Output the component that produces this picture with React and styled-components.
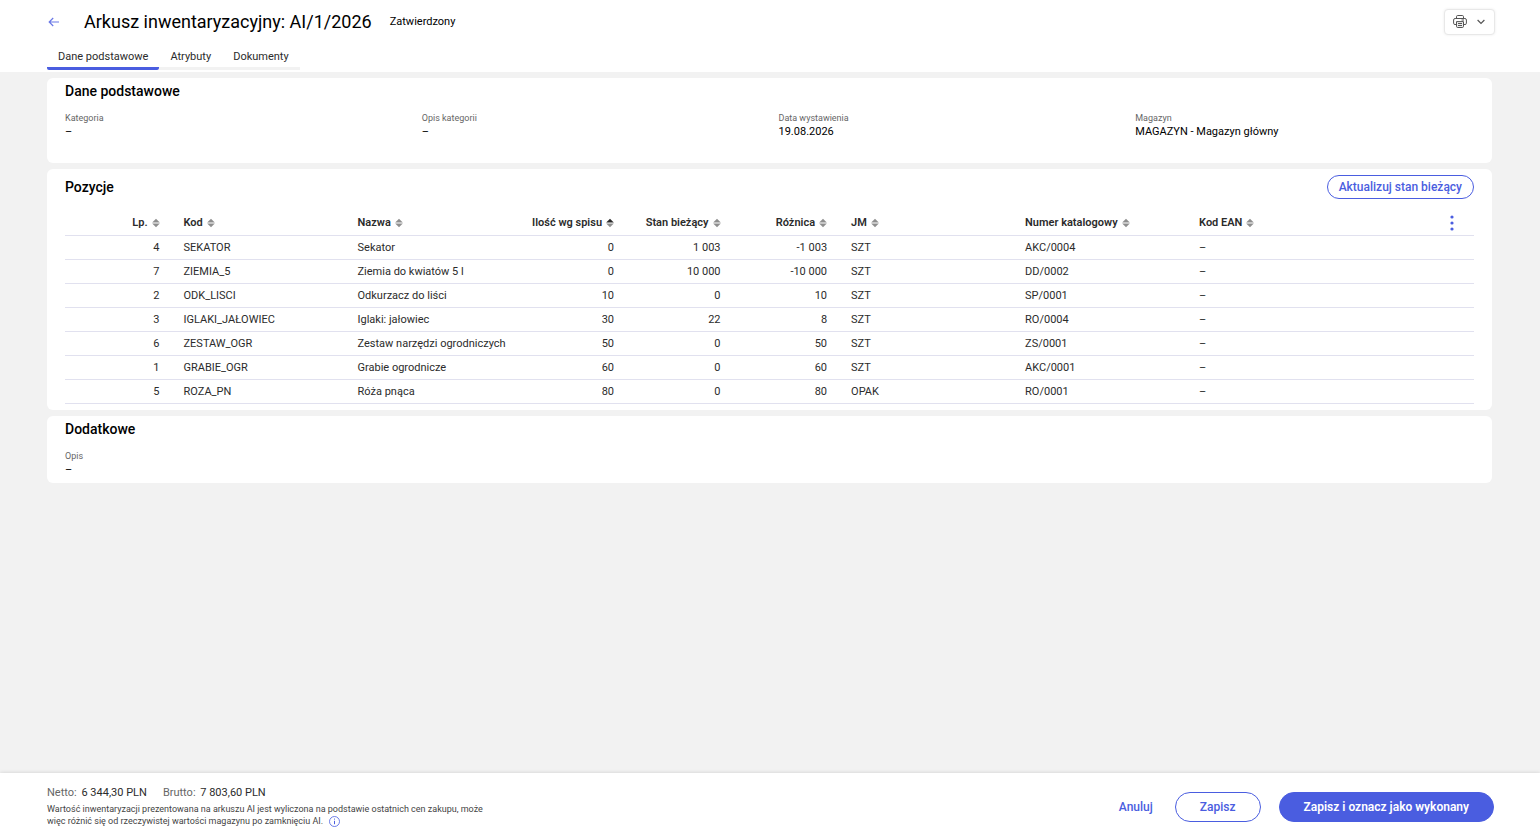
import styled, { createGlobalStyle } from "styled-components"

const fields = [
    { label: "Kategoria", value: "–" },
    { label: "Opis kategorii", value: "–" },
    { label: "Data wystawienia", value: "19.08.2026" },
    { label: "Magazyn", value: "MAGAZYN - Magazyn główny" },
]

const columns = [
    { key: "lp", label: "Lp.", numeric: true },
    { key: "code", label: "Kod" },
    { key: "name", label: "Nazwa" },
    { key: "counted", label: "Ilość wg spisu", numeric: true, sorted: true },
    { key: "stock", label: "Stan bieżący", numeric: true },
    { key: "diff", label: "Różnica", numeric: true },
    { key: "unit", label: "JM" },
    { key: "catalog", label: "Numer katalogowy" },
    { key: "ean", label: "Kod EAN" },
]

const rows = [
    { lp: "4", code: "SEKATOR", name: "Sekator", counted: "0", stock: "1 003", diff: "-1 003", unit: "SZT", catalog: "AKC/0004", ean: "–" },
    { lp: "7", code: "ZIEMIA_5", name: "Ziemia do kwiatów 5 l", counted: "0", stock: "10 000", diff: "-10 000", unit: "SZT", catalog: "DD/0002", ean: "–" },
    { lp: "2", code: "ODK_LISCI", name: "Odkurzacz do liści", counted: "10", stock: "0", diff: "10", unit: "SZT", catalog: "SP/0001", ean: "–" },
    { lp: "3", code: "IGLAKI_JAŁOWIEC", name: "Iglaki: jałowiec", counted: "30", stock: "22", diff: "8", unit: "SZT", catalog: "RO/0004", ean: "–" },
    { lp: "6", code: "ZESTAW_OGR", name: "Zestaw narzędzi ogrodniczych", counted: "50", stock: "0", diff: "50", unit: "SZT", catalog: "ZS/0001", ean: "–" },
    { lp: "1", code: "GRABIE_OGR", name: "Grabie ogrodnicze", counted: "60", stock: "0", diff: "60", unit: "SZT", catalog: "AKC/0001", ean: "–" },
    { lp: "5", code: "ROZA_PN", name: "Róża pnąca", counted: "80", stock: "0", diff: "80", unit: "OPAK", catalog: "RO/0001", ean: "–" },
]

const SortIcon = ({ sorted }) => (
    <svg width="8" height="10" viewBox="0 0 8 10" aria-hidden="true">
        <path d="M4 0.8 L7.8 4.4 H0.2 Z" fill={sorted ? "#2b2b2b" : "#8f8f8f"} />
        <path d="M4 9.2 L7.8 5.6 H0.2 Z" fill="#8f8f8f" />
    </svg>
)

const BackIcon = () => (
    <svg width="12" height="10" viewBox="0 0 12 10" fill="none" stroke="#6a78e6" strokeWidth="1.2" aria-hidden="true">
        <path d="M11 5 H1.5 M5.2 1 L1.2 5 L5.2 9" />
    </svg>
)

const PrinterIcon = () => (
    <svg width="14" height="13" viewBox="0 0 14 13" fill="none" stroke="#555" strokeWidth="1" strokeLinejoin="round" aria-hidden="true">
        <path d="M3.5 3.5 V1.7 Q3.5 0.5 4.7 0.5 H9.3 Q10.5 0.5 10.5 1.7 V3.5" />
        <path d="M3.3 9.5 H2 Q0.6 9.5 0.6 8.3 V5 Q0.6 3.5 2.1 3.5 H11.9 Q13.4 3.5 13.4 5 V8.3 Q13.4 9.5 12 9.5 H10.7" />
        <path d="M3.5 6.6 H10.5 V11.3 Q10.5 12.5 9.3 12.5 H4.7 Q3.5 12.5 3.5 11.3 Z" fill="#ececec" />
        <path d="M5 8.5 H9 M5 10.5 H9 M8.5 5 H11" />
    </svg>
)

const ChevronIcon = () => (
    <svg width="8" height="6" viewBox="0 0 8 6" fill="none" stroke="#555" strokeWidth="1.2" aria-hidden="true">
        <path d="M0.6 1 L4 4.4 L7.4 1" />
    </svg>
)

const DotsIcon = () => (
    <svg width="4" height="16" viewBox="0 0 4 16" fill="#4a5de0" aria-hidden="true">
        <circle cx="2" cy="2" r="1.6" />
        <circle cx="2" cy="8" r="1.6" />
        <circle cx="2" cy="14" r="1.6" />
    </svg>
)

const InfoIcon = () => (
    <svg width="11" height="11" viewBox="0 0 11 11" fill="none" stroke="#4a5de0" strokeWidth="0.8" aria-hidden="true">
        <circle cx="5.5" cy="5.5" r="5" />
        <path d="M5.5 4.8 V8.2 M5.5 2.6 V3.6" strokeWidth="1" />
    </svg>
)

const Field = ({ label, value }) => (
    <div>
        <FieldLabel>{label}</FieldLabel>
        <FieldValue>{value}</FieldValue>
    </div>
)

const App = () => {
    return (
        <>
            <GlobalStyle />
            <Page>
                <Header>
                    <TitleRow>
                        <BackLink href="#" aria-label="Wstecz">
                            <BackIcon />
                        </BackLink>
                        <Title>Arkusz inwentaryzacyjny: AI/1/2026</Title>
                        <Status>Zatwierdzony</Status>
                        <PrintButton type="button" aria-label="Drukuj">
                            <PrinterIcon />
                            <ChevronIcon />
                        </PrintButton>
                    </TitleRow>
                    <Tabs>
                        <Tab href="#" $active>Dane podstawowe</Tab>
                        <Tab href="#">Atrybuty</Tab>
                        <Tab href="#">Dokumenty</Tab>
                    </Tabs>
                </Header>

                <Main>
                    <Card $bottom={24}>
                        <CardTitle>Dane podstawowe</CardTitle>
                        <Fields>
                            {fields.map((field) => (
                                <Field key={field.label} {...field} />
                            ))}
                        </Fields>
                    </Card>

                    <Card $bottom={6}>
                        <CardHead>
                            <CardTitle>Pozycje</CardTitle>
                            <Button type="button" $kind="small">Aktualizuj stan bieżący</Button>
                        </CardHead>
                        <Table>
                            <thead>
                                <tr>
                                    {columns.map((col) => (
                                        <HeadCell key={col.key} $numeric={col.numeric}>
                                            <SortButton type="button">
                                                {col.label}
                                                <SortIcon sorted={col.sorted} />
                                            </SortButton>
                                        </HeadCell>
                                    ))}
                                    <MenuCell>
                                        <MenuButton type="button" aria-label="Kolumny">
                                            <DotsIcon />
                                        </MenuButton>
                                    </MenuCell>
                                </tr>
                            </thead>
                            <tbody>
                                {rows.map((row) => (
                                    <tr key={row.lp}>
                                        {columns.map((col) => (
                                            <Cell key={col.key} $numeric={col.numeric}>{row[col.key]}</Cell>
                                        ))}
                                        <Cell />
                                    </tr>
                                ))}
                            </tbody>
                        </Table>
                    </Card>

                    <Card $bottom={6}>
                        <CardTitle>Dodatkowe</CardTitle>
                        <Fields>
                            <Field label="Opis" value="–" />
                        </Fields>
                    </Card>
                </Main>

                <Footer>
                    <Summary>
                        <Totals>
                            <Total>Netto: <strong>6 344,30 PLN</strong></Total>
                            <Total>Brutto: <strong>7 803,60 PLN</strong></Total>
                        </Totals>
                        <Note>
                            Wartość inwentaryzacji prezentowana na arkuszu AI jest wyliczona na podstawie ostatnich cen zakupu, może
                            więc różnić się od rzeczywistej wartości magazynu po zamknięciu AI.
                            <InfoIcon />
                        </Note>
                    </Summary>
                    <Actions>
                        <Button type="button" $kind="text">Anuluj</Button>
                        <Button type="button">Zapisz</Button>
                        <Button type="button" $kind="primary">Zapisz i oznacz jako wykonany</Button>
                    </Actions>
                </Footer>
            </Page>
        </>
    )
}

const GlobalStyle = createGlobalStyle`
    :root {
        --primary-color: #4a5de0;
        --line-color: #e1e1ef;
    }

    * {
        box-sizing: border-box;
    }

    body {
        margin: 0;
        background: #f2f2f2;
        color: #2b2b2b;
        font-family: Roboto, "Liberation Sans", sans-serif;
        font-size: 11px;
    }

    button {
        font-family: inherit;
        cursor: pointer;
    }
`

const Page = styled.div`
    display: flex;
    flex-direction: column;
    min-height: 100vh;
`

const Header = styled.header`
    padding: 0 45px 2px 47px;
    background: white;
`

const TitleRow = styled.div`
    display: flex;
    align-items: center;
    height: 43px;
`

const BackLink = styled.a`
    display: flex;
    width: 37px;
    padding-left: 1px;
`

const Title = styled.h1`
    margin: 0 18px 0 0;
    color: black;
    font-size: 18px;
    font-weight: 400;
`

const Status = styled.span`
    color: black;
`

const PrintButton = styled.button`
    display: flex;
    align-items: center;
    justify-content: space-between;
    width: 51px;
    height: 26px;
    margin-left: auto;
    padding: 0 9px 0 8px;
    border: 1px solid #e8e8e8;
    border-radius: 4px;
    background: white;
    box-shadow: 0 0 3px rgba(0, 0, 0, 0.08);
`

const Tabs = styled.nav`
    display: flex;
`

const Tab = styled.a`
    height: 27px;
    padding: 0 11px;
    border-bottom: 3px solid ${(p) => (p.$active ? "var(--primary-color)" : "#f2f2f2")};
    border-radius: ${(p) => (p.$active ? "2px" : "0")};
    color: #2b2b2b;
    line-height: 27px;
    text-decoration: none;
`

const Main = styled.main`
    display: flex;
    flex: 1;
    flex-direction: column;
    gap: 6px;
    padding: 6px 48px 6px 47px;
`

const Card = styled.section`
    padding: 6px 18px ${(p) => p.$bottom}px;
    border-radius: 6px;
    background: white;
`

const CardHead = styled.div`
    display: flex;
    align-items: center;
    justify-content: space-between;
    margin-bottom: 12px;
`

const CardTitle = styled.h2`
    margin: 0;
    color: black;
    font-size: 14px;
    font-weight: 500;
    line-height: 14px;
`

const Fields = styled.div`
    display: grid;
    grid-template-columns: repeat(4, 1fr);
    gap: 18px;
    padding-top: 14px;
`

const FieldLabel = styled.div`
    color: #666;
    font-size: 9px;
    line-height: 12px;
`

const FieldValue = styled.div`
    color: black;
    line-height: 15px;
`

const Table = styled.table`
    width: 100%;
    border-collapse: collapse;
    table-layout: fixed;
`

const HeadCell = styled.th`
    width: ${(p) => (p.$numeric ? "7.56%" : "12.35%")};
    height: 24px;
    padding: 0 12px;
    border-bottom: 1px solid var(--line-color);
    text-align: ${(p) => (p.$numeric ? "right" : "left")};
    white-space: nowrap;
`

const SortButton = styled.button`
    display: inline-flex;
    align-items: center;
    gap: 4px;
    padding: 0;
    border: none;
    background: none;
    color: #2b2b2b;
    font-size: 11px;
    font-weight: 600;
`

const MenuCell = styled.th`
    padding: 0 20px;
    border-bottom: 1px solid var(--line-color);
    text-align: right;
`

const MenuButton = styled.button`
    display: inline-flex;
    padding: 0;
    border: none;
    background: none;
    vertical-align: middle;
`

const Cell = styled.td`
    height: 24px;
    padding: 0 12px;
    border-bottom: 1px solid var(--line-color);
    text-align: ${(p) => (p.$numeric ? "right" : "left")};
    white-space: nowrap;
`

const Footer = styled.footer`
    position: sticky;
    bottom: 0;
    display: flex;
    align-items: flex-start;
    justify-content: space-between;
    padding: 12px 46px 11px 47px;
    background: white;
    box-shadow: 0 0 4px rgba(0, 0, 0, 0.15);
`

const Summary = styled.div`
    width: 440px;
`

const Totals = styled.div`
    display: flex;
    gap: 16px;
    line-height: 15px;
`

const Total = styled.div`
    color: #666;

    strong {
        margin-left: 2px;
        color: #2b2b2b;
        font-weight: 400;
    }
`

const Note = styled.p`
    margin: 3px 0 0;
    color: #444;
    font-size: 9px;
    line-height: 12px;

    svg {
        margin-left: 6px;
        vertical-align: -3px;
    }
`

const Actions = styled.div`
    display: flex;
    align-items: center;
    gap: 18px;
    padding-top: 7px;
`

const Button = styled.button`
    height: ${(p) => (p.$kind === "small" ? "24px" : "30px")};
    padding: ${(p) => (p.$kind === "text" ? "0 4px" : p.$kind === "small" ? "0 11px" : "0 24px")};
    border: ${(p) => (p.$kind === "text" ? "none" : "1px solid var(--primary-color)")};
    border-radius: 15px;
    background: ${(p) => (p.$kind === "primary" ? "var(--primary-color)" : "white")};
    color: ${(p) => (p.$kind === "primary" ? "white" : "var(--primary-color)")};
    font-size: 12px;
    font-weight: ${(p) => (p.$kind === "primary" ? 600 : 500)};
`

export default App
